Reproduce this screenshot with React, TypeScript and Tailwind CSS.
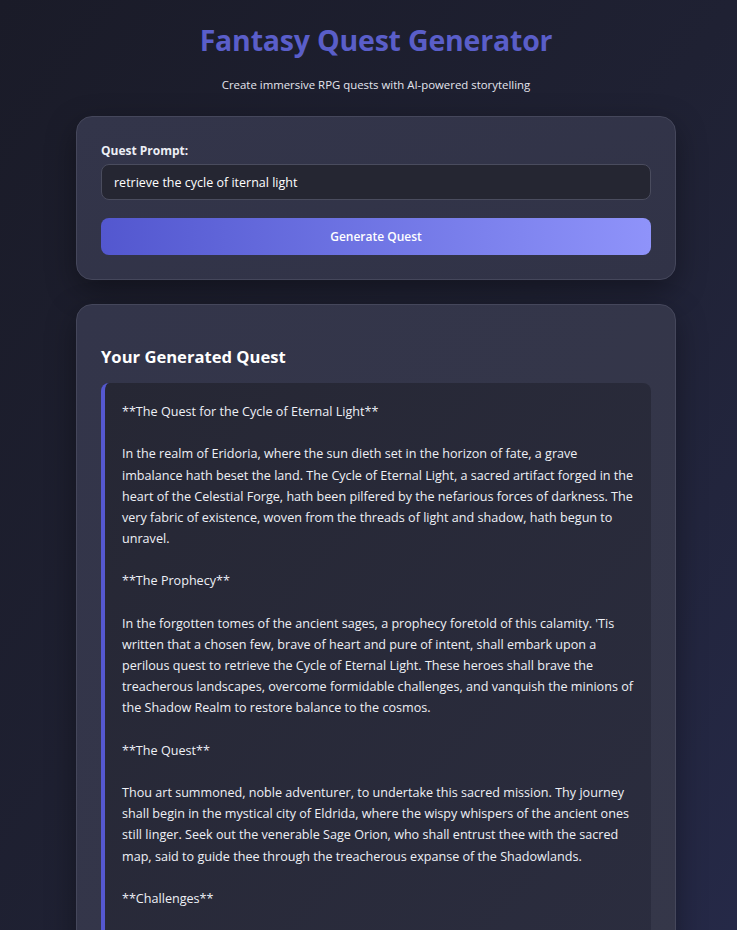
import { useState } from "react"

const quest = `**The Quest for the Cycle of Eternal Light**

In the realm of Eridoria, where the sun dieth set in the horizon of fate, a grave imbalance hath beset the land. The Cycle of Eternal Light, a sacred artifact forged in the heart of the Celestial Forge, hath been pilfered by the nefarious forces of darkness. The very fabric of existence, woven from the threads of light and shadow, hath begun to unravel.

**The Prophecy**

In the forgotten tomes of the ancient sages, a prophecy foretold of this calamity. 'Tis written that a chosen few, brave of heart and pure of intent, shall embark upon a perilous quest to retrieve the Cycle of Eternal Light. These heroes shall brave the treacherous landscapes, overcome formidable challenges, and vanquish the minions of the Shadow Realm to restore balance to the cosmos.

**The Quest**

Thou art summoned, noble adventurer, to undertake this sacred mission. Thy journey shall begin in the mystical city of Eldrida, where the wispy whispers of the ancient ones still linger. Seek out the venerable Sage Orion, who shall entrust thee with the sacred map, said to guide thee through the treacherous expanse of the Shadowlands.

**Challenges**

Along thy path, thou shalt face the Trials of the Ancients, riddles and perils set forth to test thy worth.`

export default function App() {
  const [prompt, setPrompt] = useState("retrieve the cycle of iternal light")

  return (
    <div
      className="min-h-screen w-full bg-gradient-to-br from-[#1a1b28] via-[#1f2133] to-[#262a4a] pl-[15px] text-white"
      style={{ fontFamily: '"Open Sans", "Noto Sans", sans-serif' }}
    >
      <div className="mx-auto w-[600px] pt-[19px] pb-10">
        {/* Header */}
        <header className="text-center">
          <h1 className="text-[28.5px] leading-[42px] font-bold text-[#5a5ec9] tracking-[-0.2px]">
            Fantasy Quest Generator
          </h1>
          <p className="mt-[15px] text-[11.4px] leading-[18px] text-[#e4e5ee]">
            Create immersive RPG quests with AI-powered storytelling
          </p>
        </header>

        {/* Prompt card */}
        <section className="mt-[22px] rounded-2xl border border-[#45475b] bg-gradient-to-br from-[#33354a] to-[#313347] px-6 pt-[25px] pb-6 shadow-[0_10px_30px_rgba(0,0,0,0.35)]">
          <label className="block text-[12px] leading-[18px] font-bold text-[#eceef5]">Quest Prompt:</label>
          <input
            value={prompt}
            onChange={(e) => setPrompt(e.target.value)}
            className="mt-[4px] block h-[36px] w-full rounded-lg border border-[#4a4c5e] bg-[#252632] px-3 text-[12.5px] text-white outline-none"
          />
          <button className="mt-[18px] h-[37px] w-full rounded-lg bg-gradient-to-r from-[#5357cf] to-[#8f93fa] text-[12px] font-semibold text-white">
            Generate Quest
          </button>
        </section>

        {/* Result card */}
        <section className="mt-[24px] rounded-2xl border border-[#45475b] bg-gradient-to-br from-[#33354a] to-[#353749] px-6 pt-[40px] pb-6 shadow-[0_10px_30px_rgba(0,0,0,0.35)]">
          <h2 className="text-[16.6px] leading-[24px] font-bold text-white">Your Generated Quest</h2>
          <div className="mt-[14px] rounded-lg border-l-4 border-[#5558d0] bg-gradient-to-br from-[#262734] to-[#2b2d3f] pt-[18px] pb-[18px] pl-[17px] pr-[16px]">
            <p className="whitespace-pre-wrap text-[12.6px] leading-[21.17px] text-[#eef0f6]">{quest}</p>
          </div>
        </section>
      </div>
    </div>
  )
}
